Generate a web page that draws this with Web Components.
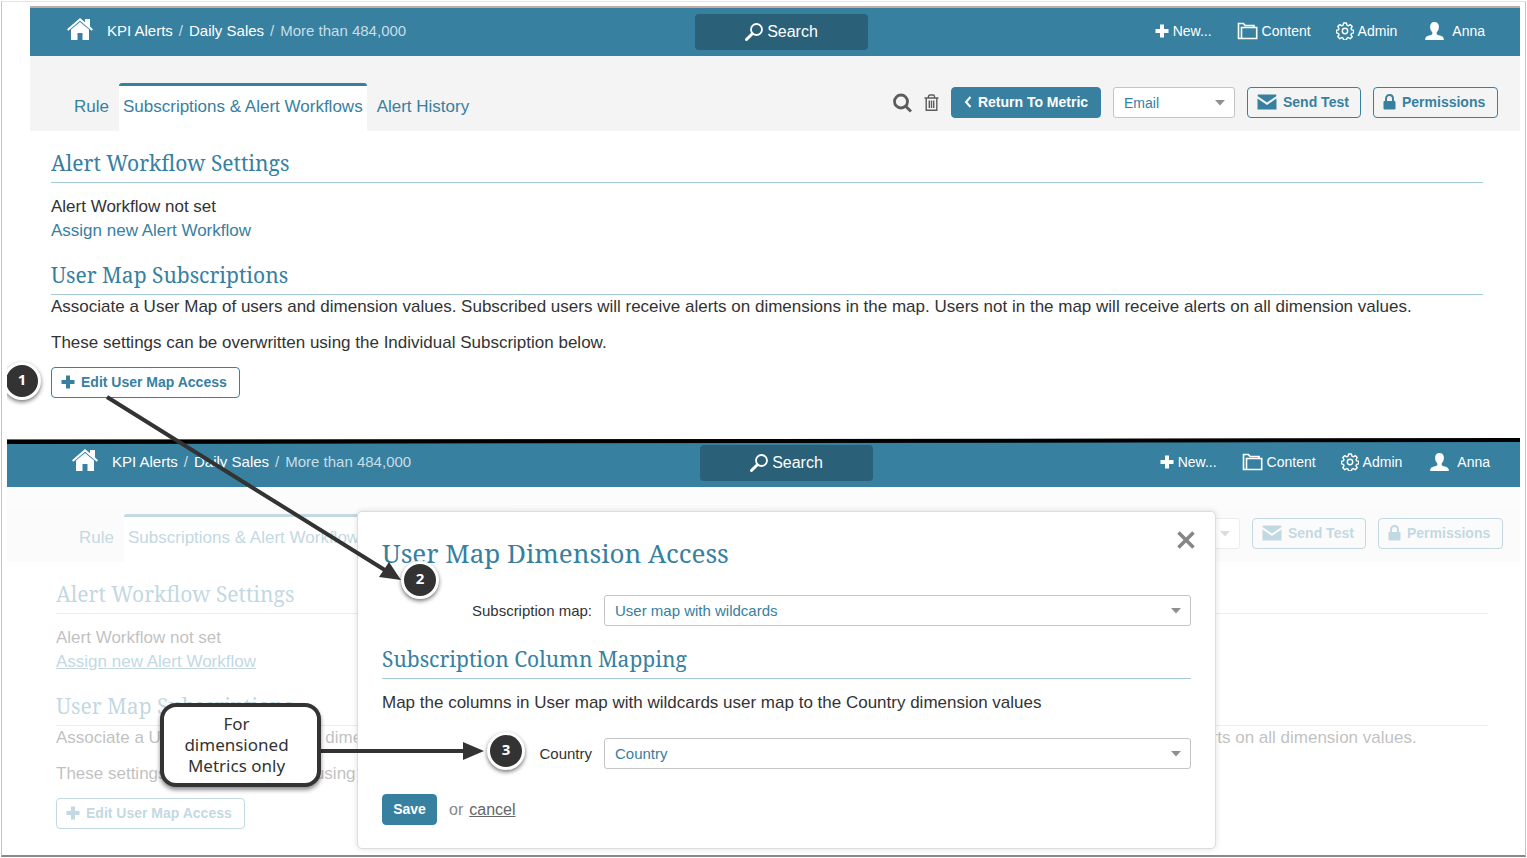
<!DOCTYPE html>
<html lang="en">
<head>
<meta charset="utf-8">
<title>KPI Alerts - User Map Access</title>
<style>
  body { margin: 0; background: #fff; font-family: "Liberation Sans", Arial, sans-serif; color: #333; }
</style>
</head>
<body>
<guide-page></guide-page>

<script>
const define = (name, html, setup) => {
  const template = document.createElement('template');
  template.innerHTML = html;
  customElements.define(name, class extends HTMLElement {
    constructor() {
      super();
      this.attachShadow({ mode: 'open' }).append(template.content.cloneNode(true));
    }
    connectedCallback() { if (setup) setup(this, this.shadowRoot); }
  });
};

const ICONS = {
  home: [26, 22, '<path fill="currentColor" d="M13 0 18 4.300V1h5v7.500l3 2.700-1.300 1.500L13 2.800 1.300 12.700 0 11.200z"/><path fill="currentColor" d="M13 4 22 11.500v10.500h-6.500v-7h-5v7H4V11.500z"/>'],
  lens: [18, 18, '<circle cx="11.500" cy="6.500" r="5.500" fill="none" stroke="currentColor" stroke-width="1.800"/><path d="M7.300 10.800 1.500 16.500" stroke="currentColor" stroke-width="3" stroke-linecap="round"/>'],
  plus: [14, 14, '<path fill="currentColor" d="M5 0.500h4V5h4.500v4H9v4.500H5V9H.500V5H5z"/>'],
  folder: [21, 18, '<path fill="none" stroke="currentColor" stroke-width="1.600" d="M4.500 16.500h-3v-15h5l1.500 2h9v2M4.500 16.500V5.500h15.200v11z"/>'],
  gear: [18, 18, '<circle cx="9" cy="9" r="2.700" fill="none" stroke="currentColor" stroke-width="1.400"/><path fill="none" stroke="currentColor" stroke-width="1.400" stroke-linejoin="round" d="M7.600 1h2.800l.5 2.200 1.400.6 1.900-1.200 2 2-1.200 1.900.6 1.400 2.100.4v2.600l-2.100.5-.6 1.400 1.200 1.900-2 2-1.900-1.200-1.400.6-.5 1.900H7.600l-.5-1.900-1.400-.6-1.900 1.200-2-2L3 12.800l-.6-1.400-1.900-.5V8.300l1.900-.4.600-1.400-1.200-1.900 2-2 1.900 1.200 1.400-.6z"/>'],
  person: [19, 18, '<path fill="currentColor" d="M9.500 0c3 0 4.600 2 4.400 5-.1 2.500-1 4.200-2.200 5.300v2c1 1 5.300 1.500 6.300 2.700.7.800.8 1.800.8 3H.200c0-1.200.1-2.200.8-3 1-1.200 5.300-1.700 6.300-2.700v-2C6.100 9.200 5.200 7.500 5.100 5 4.900 2 6.500 0 9.500 0z"/>'],
  find: [19, 20, '<circle cx="8" cy="8.500" r="6.500" fill="none" stroke="currentColor" stroke-width="2.800"/><path d="m12.700 13.200 5.300 5.300" stroke="currentColor" stroke-width="3"/>'],
  trash: [15, 18, '<path fill="none" stroke="currentColor" stroke-width="1.400" d="M.5 4h14M4.500 4V2.500C4.500 1.500 5 1 6 1h3c1 0 1.500.5 1.500 1.500V4M2.200 4v12.200h10.600V4M5.300 6.500v7.500M7.500 6.500v7.500M9.700 6.500v7.500"/>'],
  back: [8, 12, '<path fill="none" stroke="currentColor" stroke-width="2" d="M6.500 1 2 6l4.500 5"/>'],
  mail: [20, 16, '<path fill="currentColor" d="M1 0.500h18l.5 1.500L10 8.500.500 2z"/><path fill="currentColor" d="M.500 4.500 10 11l9.500-6.500V15.500H.500z"/>'],
  lock: [13, 16, '<path fill="none" stroke="currentColor" stroke-width="2" d="M3 8V5c0-5.300 7-5.300 7 0v3"/><rect y="7" x=".500" width="12" height="8.500" rx="1" fill="currentColor"/>'],
  close: [18, 18, '<path stroke="currentColor" stroke-width="3.600" d="m1.500 1.500 15 15m0-15-15 15"/>'],
  caret: [10, 6, '<path fill="currentColor" d="M0 0h10L5 5.500z"/>']
};

define('ui-icon', '<style>:host{display:inline-flex;flex:none} svg{display:block}</style><span></span>', (el, root) => {
  const [w, h, art] = ICONS[el.getAttribute('name')];
  root.querySelector('span').innerHTML = `<svg width="${w}" height="${h}" viewBox="0 0 ${w} ${h}" aria-hidden="true">${art}</svg>`;
});

define('ui-button', `
<style>
  :host { display: inline-flex; }
  button { display: flex; align-items: center; justify-content: center; gap: 6px; height: 31px; box-sizing: border-box;
    width: 100%; padding: 0 9px 2px; border: 1px solid #3780a0; border-radius: 4px; background: #fff; color: #3780a0;
    font: bold 14px/20px "Liberation Sans", Arial, sans-serif; white-space: nowrap; }
  :host([primary]) button { background: #3780a0; color: #fff; }
  :host([clear]) button { background: none; }
  :host([start]) button { justify-content: flex-start; }
</style>
<button type="button"><slot name="icon"></slot><slot></slot></button>`);

define('ui-select', `
<style>
  :host { display: flex; align-items: center; gap: 12px; color: #333; font-size: 15px; line-height: 20px; }
  label { width: 210px; text-align: right; }
  label:empty { display: none; }
  .box { flex: 1; position: relative; display: flex; }
  select { appearance: none; flex: 1; min-width: 0; height: 31px; box-sizing: border-box; padding: 0 24px 0 10px;
    border: 1px solid #c4c4c4; border-radius: 3px; background: #fff; color: #3780a0;
    font-family: "Liberation Sans", Arial, sans-serif; font-size: inherit; }
  ui-icon { position: absolute; right: 10px; top: 13px; color: #8f8f8f; pointer-events: none; }
  :host([compact]) { font-size: 14px; }
</style>
<label for="field"></label>
<div class="box"><select id="field"><option></option></select><ui-icon name="caret"></ui-icon></div>`, (el, root) => {
  root.querySelector('label').textContent = el.getAttribute('label') || '';
  root.querySelector('option').textContent = el.getAttribute('value');
  if (!el.hasAttribute('label')) root.querySelector('select').setAttribute('aria-label', 'Alert type');
});

define('app-header', `
<style>
  :host { display: grid; grid-template-columns: 1fr 173px 1fr; align-items: center; height: 48px; background: #3780a0;
    padding: 0 var(--head-end) 0 var(--head-start); color: #fff; }
  a { color: inherit; text-decoration: none; }
  .crumbs, nav, nav a, button { display: flex; align-items: center; white-space: nowrap; }
  .crumbs { gap: 6px; padding-bottom: 2px; font-size: 15px; line-height: 20px; }
  .home { margin-right: 8px; }
  .sep, .last { color: #c8dde6; }
  button { justify-content: center; gap: 4px; height: 36px; border: 0; border-radius: 4px; background: #2a6078; color: #fff;
    font: 16px/20px "Liberation Sans", Arial, sans-serif; }
  nav { justify-content: flex-end; gap: 25px; padding: 0 11px 2px 0; font-size: 14px; line-height: 20px; }
  nav a { gap: 4px; }
  nav a.user { gap: 8px; margin-left: 3px; }
</style>
<div class="crumbs"><a class="home" href="#" aria-label="Home"><ui-icon name="home"></ui-icon></a><a href="#">KPI Alerts</a><span class="sep">/</span><a href="#">Daily Sales</a><span class="sep">/</span><span class="last">More than 484,000</span></div>
<button type="button"><ui-icon name="lens"></ui-icon>Search</button>
<nav>
  <a href="#"><ui-icon name="plus"></ui-icon>New...</a>
  <a href="#"><ui-icon name="folder"></ui-icon>Content</a>
  <a href="#"><ui-icon name="gear"></ui-icon>Admin</a>
  <a class="user" href="#"><ui-icon name="person"></ui-icon>Anna</a>
</nav>`);

define('alert-toolbar', `
<style>
  :host { display: flex; justify-content: space-between; align-items: flex-end; height: 75px; background: #f4f4f4;
    padding: 0 var(--bar-end) 0 var(--bar-start); }
  .tabs, .actions { display: flex; align-items: center; }
  .tabs a { box-sizing: border-box; height: 48px; padding: 0 10px; border-top: 3px solid transparent; color: #3780a0;
    font-size: 17px; line-height: 41px; text-decoration: none; white-space: nowrap; }
  .tabs a.on { padding: 0 4px; background: #fff; border-color: #3780a0; border-radius: 3px 3px 0 0; }
  .actions { gap: 12px; padding-bottom: 13px; }
  .plain { display: flex; border: 0; padding: 0; background: none; color: #5c5c5c; }
  .back { width: 150px; } .kind { width: 122px; } .test { width: 114px; } .perm { width: 125px; }
</style>
<div class="tabs"><a href="#">Rule</a><a class="on" href="#">Subscriptions &amp; Alert Workflows</a><a href="#">Alert History</a></div>
<div class="actions">
  <button class="plain" type="button" aria-label="Preview"><ui-icon name="find"></ui-icon></button>
  <button class="plain" type="button" aria-label="Delete"><ui-icon name="trash"></ui-icon></button>
  <ui-button class="back" primary><ui-icon slot="icon" name="back"></ui-icon>Return To Metric</ui-button>
  <ui-select class="kind" compact value="Email"></ui-select>
  <ui-button class="test" clear start><ui-icon slot="icon" name="mail"></ui-icon>Send Test</ui-button>
  <ui-button class="perm" clear start><ui-icon slot="icon" name="lock"></ui-icon>Permissions</ui-button>
</div>`);

define('section-title', `
<style>
  :host { display: block; border-bottom: 1px solid #a5cbdb; }
  h2 { margin: 0; padding-bottom: 4px; color: #3780a0; font: 21px/29px "Noto Serif", "Droid Serif", "DejaVu Serif", serif; white-space: nowrap; }
</style>
<h2><slot></slot></h2>`);

define('alert-screen', `
<style>
  :host { display: block; position: relative; --head-start: 37px; --head-end: 24px; --bar-start: 34px; --bar-end: 22px; }
  :host([faded]) { --head-start: 65px; --head-end: 19px; --bar-start: 62px; --bar-end: 17px; }
  main { padding: 18px 37px 41px 21px; font-size: 17px; }
  :host([faded]) main { padding: 18px 32px 21px 49px; }
  :host([faded]) main, :host([faded]) alert-toolbar { opacity: .3; }
  .status { margin: 12px 0 18px; line-height: 24px; }
  .status a { color: #3780a0; text-decoration: none; }
  :host([faded]) .status a { text-decoration: underline; }
  p { margin: 0 0 13px; line-height: 22px; }
  .note { margin: 1px 0 14px; white-space: nowrap; }
  .edit { width: 189px; }
</style>
<app-header></app-header>
<alert-toolbar></alert-toolbar>
<main>
  <section-title>Alert Workflow Settings</section-title>
  <div class="status">Alert Workflow not set<br><a href="#">Assign new Alert Workflow</a></div>
  <section-title>User Map Subscriptions</section-title>
  <p class="note">Associate a User Map of users and dimension values. Subscribed users will receive alerts on dimensions in the map. Users not in the map will receive alerts on all dimension values.</p>
  <p>These settings can be overwritten using the Individual Subscription below.</p>
  <ui-button class="edit" start><ui-icon slot="icon" name="plus"></ui-icon>Edit User Map Access</ui-button>
</main>
<slot></slot>`);

define('map-dialog', `
<style>
  :host { display: block; box-sizing: border-box; padding: 21px 24px 23px; border: 1px solid #ddd; border-radius: 5px;
    background: #fff; box-shadow: 0 0 6px rgba(0,0,0,.12); }
  .top { display: flex; justify-content: space-between; align-items: flex-start; }
  h1 { margin: 0 0 22px; color: #3780a0; font: 26px/40px "Noto Serif", "Droid Serif", "DejaVu Serif", serif; white-space: nowrap; }
  .close { display: flex; padding: 0; margin: -2px -4px 0 0; border: 0; background: none; color: #868686; }
  section-title { margin: 19px 0 13px; }
  p { margin: 0 0 24px; font-size: 17px; line-height: 22px; }
  .foot { display: flex; align-items: center; margin-top: 25px; font-size: 16px; line-height: 20px; color: #888; }
  .save { width: 55px; margin-right: 12px; }
  .foot a { margin-left: 6px; color: #666; }
</style>
<div class="top"><h1>User Map Dimension Access</h1><button class="close" type="button" aria-label="Close"><ui-icon name="close"></ui-icon></button></div>
<ui-select label="Subscription map:" value="User map with wildcards"></ui-select>
<section-title>Subscription Column Mapping</section-title>
<p>Map the columns in User map with wildcards user map to the Country dimension values</p>
<ui-select label="Country" value="Country"></ui-select>
<div class="foot"><ui-button class="save" primary>Save</ui-button><span>or</span><a href="#">cancel</a></div>`);

define('step-badge', `
<style>
  :host { position: absolute; box-sizing: border-box; display: flex; justify-content: center; width: 38px; height: 38px; padding-top: 4px;
    border: 3px solid #fff; border-radius: 50%; background: #333; color: #fff; box-shadow: 0 2px 4px rgba(0,0,0,.55);
    font: bold 15px/20px "Open Sans", "Noto Sans", sans-serif; }
</style>
<slot></slot>`);

define('note-box', `
<style>
  :host { position: absolute; box-sizing: border-box; width: 161px; height: 84px; padding: 6px 8px 0 0; border: 4px solid #333; border-radius: 16px;
    background: #fff; box-shadow: 0 3px 4px rgba(0,0,0,.45); text-align: center;
    font: 17px/21px "Noto Sans", "Open Sans", sans-serif; color: #333; }
</style>
<slot></slot>`);

define('guide-page', `
<style>
  :host { display: block; position: relative; box-sizing: border-box; margin: 1px 1px 2px; padding: 4px 5px 5px;
    border: 1px solid #c4c4c4; border-top-color: #e4e4e4; border-bottom: 2px solid #888; }
  .first { margin-left: 23px; border-top: 2px solid #c9a8a2; }
  .second { display: block; }
  map-dialog { position: absolute; top: 72px; left: 350px; right: 304px; }
  .layer { position: absolute; top: -2px; left: -2px; right: -2px; bottom: 0; }
  .rule, .arrows { position: absolute; left: 0; top: 0; pointer-events: none; }
  .rule { left: 7px; top: 438px; width: calc(100% - 14px); height: 6px; }
  .clip { position: absolute; left: 7px; top: 356px; width: 40px; height: 52px; overflow: hidden; }
  .one { left: -4px; top: 6px; }
  .two { left: 401px; top: 561px; }
  .three { left: 487px; top: 732px; }
  note-box { left: 160px; top: 703px; }
</style>
<alert-screen class="first"></alert-screen>
<alert-screen class="second" faded><map-dialog role="dialog" aria-label="User Map Dimension Access"></map-dialog></alert-screen>
<div class="layer">
  <svg class="rule" viewBox="0 0 100 6" preserveAspectRatio="none" aria-hidden="true"><path d="M0 2 100 0v4L0 6z"/></svg>
  <svg class="arrows" width="520" height="800" aria-hidden="true">
    <g stroke="#333" stroke-width="4" fill="#333"><path d="M107 397 388 572M321 751H468"/><path stroke="none" d="m401 580-22-3 10-15zM484 751l-21 9v-18z"/></g>
  </svg>
  <note-box>For<br>dimensioned<br>Metrics only</note-box>
  <div class="clip"><step-badge class="one">1</step-badge></div>
  <step-badge class="two">2</step-badge>
  <step-badge class="three">3</step-badge>
</div>`);
</script>
</body>
</html>
